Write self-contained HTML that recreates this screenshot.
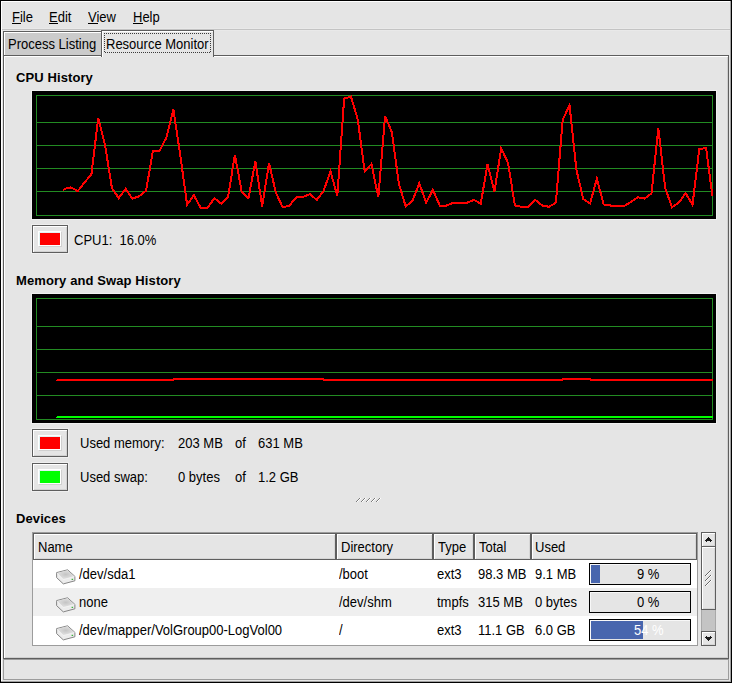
<!DOCTYPE html>
<html><head><meta charset="utf-8"><style>
html,body{margin:0;padding:0;}
body{width:732px;height:683px;overflow:hidden;position:relative;background:#e5e5e5;font-family:"Liberation Sans",sans-serif;}
.t{position:absolute;font-size:14px;line-height:15px;white-space:nowrap;color:#000;transform:scaleX(0.9286);transform-origin:0 0;}
.b{font-size:13px;font-weight:bold;transform:none;letter-spacing:0.1px;}
</style></head><body>
<div style="position:absolute;left:0px;top:0px;width:732px;height:683px;background:#000"></div>
<div style="position:absolute;left:1px;top:1px;width:730px;height:681px;background:#a0a0a0"></div>
<div style="position:absolute;left:1px;top:1px;width:729px;height:680px;background:#ffffff"></div>
<div style="position:absolute;left:2px;top:2px;width:728px;height:679px;background:#e5e5e5"></div>
<div style="position:absolute;left:2px;top:28px;width:728px;height:1px;background:#e9e9e9"></div>
<div style="position:absolute;left:2px;top:29px;width:728px;height:1px;background:#c3c3c3"></div>
<div style="position:absolute;left:2px;top:30px;width:728px;height:1px;background:#e9e9e9"></div>
<div class="t" style="left:12px;top:10px;">File</div>
<div style="position:absolute;left:12px;top:23px;width:9px;height:1px;background:#000"></div>
<div class="t" style="left:49px;top:10px;">Edit</div>
<div style="position:absolute;left:49px;top:23px;width:9px;height:1px;background:#000"></div>
<div class="t" style="left:88px;top:10px;">View</div>
<div style="position:absolute;left:88px;top:23px;width:10px;height:1px;background:#000"></div>
<div class="t" style="left:133px;top:10px;">Help</div>
<div style="position:absolute;left:133px;top:23px;width:10px;height:1px;background:#000"></div>
<div style="position:absolute;left:3px;top:55px;width:726px;height:604px;background:#5e5e5e"></div>
<div style="position:absolute;left:4px;top:56px;width:724px;height:602px;background:#fff"></div>
<div style="position:absolute;left:5px;top:57px;width:723px;height:601px;background:#cfcfcf"></div>
<div style="position:absolute;left:5px;top:57px;width:722px;height:600px;background:#e5e5e5"></div>
<div style="position:absolute;left:3px;top:31px;width:99px;height:25px;background:#5e5e5e"></div>
<div style="position:absolute;left:4px;top:32px;width:97px;height:23px;background:#fff"></div>
<div style="position:absolute;left:5px;top:33px;width:96px;height:22px;background:#cbcbcb"></div>
<div class="t" style="left:8px;top:37px;">Process Listing</div>
<div style="position:absolute;left:101px;top:30px;width:113px;height:27px;background:#5e5e5e"></div>
<div style="position:absolute;left:102px;top:31px;width:111px;height:26px;background:#fff"></div>
<div style="position:absolute;left:103px;top:32px;width:110px;height:26px;background:#e5e5e5"></div>
<svg style="position:absolute;left:0;top:0" width="732" height="683"><path d="M104 33h1v1h-1zM105 52h1v1h-1zM106 33h1v1h-1zM107 52h1v1h-1zM108 33h1v1h-1zM109 52h1v1h-1zM110 33h1v1h-1zM111 52h1v1h-1zM112 33h1v1h-1zM113 52h1v1h-1zM114 33h1v1h-1zM115 52h1v1h-1zM116 33h1v1h-1zM117 52h1v1h-1zM118 33h1v1h-1zM119 52h1v1h-1zM120 33h1v1h-1zM121 52h1v1h-1zM122 33h1v1h-1zM123 52h1v1h-1zM124 33h1v1h-1zM125 52h1v1h-1zM126 33h1v1h-1zM127 52h1v1h-1zM128 33h1v1h-1zM129 52h1v1h-1zM130 33h1v1h-1zM131 52h1v1h-1zM132 33h1v1h-1zM133 52h1v1h-1zM134 33h1v1h-1zM135 52h1v1h-1zM136 33h1v1h-1zM137 52h1v1h-1zM138 33h1v1h-1zM139 52h1v1h-1zM140 33h1v1h-1zM141 52h1v1h-1zM142 33h1v1h-1zM143 52h1v1h-1zM144 33h1v1h-1zM145 52h1v1h-1zM146 33h1v1h-1zM147 52h1v1h-1zM148 33h1v1h-1zM149 52h1v1h-1zM150 33h1v1h-1zM151 52h1v1h-1zM152 33h1v1h-1zM153 52h1v1h-1zM154 33h1v1h-1zM155 52h1v1h-1zM156 33h1v1h-1zM157 52h1v1h-1zM158 33h1v1h-1zM159 52h1v1h-1zM160 33h1v1h-1zM161 52h1v1h-1zM162 33h1v1h-1zM163 52h1v1h-1zM164 33h1v1h-1zM165 52h1v1h-1zM166 33h1v1h-1zM167 52h1v1h-1zM168 33h1v1h-1zM169 52h1v1h-1zM170 33h1v1h-1zM171 52h1v1h-1zM172 33h1v1h-1zM173 52h1v1h-1zM174 33h1v1h-1zM175 52h1v1h-1zM176 33h1v1h-1zM177 52h1v1h-1zM178 33h1v1h-1zM179 52h1v1h-1zM180 33h1v1h-1zM181 52h1v1h-1zM182 33h1v1h-1zM183 52h1v1h-1zM184 33h1v1h-1zM185 52h1v1h-1zM186 33h1v1h-1zM187 52h1v1h-1zM188 33h1v1h-1zM189 52h1v1h-1zM190 33h1v1h-1zM191 52h1v1h-1zM192 33h1v1h-1zM193 52h1v1h-1zM194 33h1v1h-1zM195 52h1v1h-1zM196 33h1v1h-1zM197 52h1v1h-1zM198 33h1v1h-1zM199 52h1v1h-1zM200 33h1v1h-1zM201 52h1v1h-1zM202 33h1v1h-1zM203 52h1v1h-1zM204 33h1v1h-1zM205 52h1v1h-1zM206 33h1v1h-1zM207 52h1v1h-1zM208 33h1v1h-1zM209 52h1v1h-1zM210 33h1v1h-1zM104 35h1v1h-1zM210 35h1v1h-1zM104 37h1v1h-1zM210 37h1v1h-1zM104 39h1v1h-1zM210 39h1v1h-1zM104 41h1v1h-1zM210 41h1v1h-1zM104 43h1v1h-1zM210 43h1v1h-1zM104 45h1v1h-1zM210 45h1v1h-1zM104 47h1v1h-1zM210 47h1v1h-1zM104 49h1v1h-1zM210 49h1v1h-1zM104 51h1v1h-1zM210 51h1v1h-1z" fill="#3a3a3a" shape-rendering="crispEdges"/></svg>
<div class="t" style="left:106px;top:37px;">Resource Monitor</div>
<div class="t b" style="left:16px;top:70px;">CPU History</div>
<div class="t b" style="left:16px;top:273px;">Memory and Swap History</div>
<div class="t b" style="left:16px;top:511px;">Devices</div>
<div style="position:absolute;left:31px;top:90px;width:686px;height:130px;background:#f1f1f1"></div>
<div style="position:absolute;left:32px;top:91px;width:684px;height:128px;background:#000"></div>
<div style="position:absolute;left:36px;top:95px;width:677px;height:121px;border:1px solid #228b22;box-sizing:border-box"></div>
<div style="position:absolute;left:36px;top:122px;width:677px;height:1px;background:#228b22"></div>
<div style="position:absolute;left:36px;top:145px;width:677px;height:1px;background:#228b22"></div>
<div style="position:absolute;left:36px;top:168px;width:677px;height:1px;background:#228b22"></div>
<div style="position:absolute;left:36px;top:191px;width:677px;height:1px;background:#228b22"></div>
<svg style="position:absolute;left:0;top:0" width="732" height="683"><polyline points="64.12,188.9 70.95,187.4 77.78,191.1 84.61,182.4 91.44,174.1 98.27,117.8 105.10,145.5 111.93,188.0 118.76,198.1 125.59,188.9 132.42,198.6 139.25,196.2 146.08,190.7 152.91,151.0 159.74,150.7 166.57,137.2 173.40,109.5 180.23,155.0 187.06,204.5 193.89,195.3 200.72,207.9 207.55,207.9 214.38,198.1 221.21,203.6 228.04,197.2 234.87,154.7 241.70,191.6 248.53,198.1 255.36,161.2 262.19,206.4 269.02,163.0 275.85,192.6 282.68,207.3 289.51,205.5 296.34,197.2 303.17,196.8 310.00,194.0 316.83,200.0 323.66,190.7 330.49,171.3 337.32,196.2 344.15,98.5 350.98,96.6 357.81,119.7 364.64,171.3 371.47,164.0 378.30,197.2 385.13,116.0 391.96,132.6 398.79,183.3 405.62,206.4 412.45,200.9 419.28,183.3 426.11,202.7 432.94,189.8 439.77,205.5 446.60,205.5 453.43,202.7 460.26,202.7 467.09,202.7 473.92,200.0 480.75,203.6 487.58,164.0 494.41,191.6 501.24,148.3 508.07,163.0 514.90,205.5 521.73,206.8 528.56,206.8 535.39,200.0 542.22,205.5 549.05,206.8 555.88,202.7 562.71,119.7 569.54,105.3 576.37,169.5 583.20,199.0 590.03,203.6 596.86,178.7 603.69,204.5 610.52,205.5 617.35,205.5 624.18,206.0 631.01,201.8 637.84,197.2 644.67,198.6 651.50,193.5 658.33,128.0 665.16,188.0 671.99,207.3 678.82,202.7 685.65,193.1 692.48,204.9 699.31,148.8 706.14,148.3 712.40,196.2" fill="none" stroke="#ff0000" stroke-width="2" shape-rendering="crispEdges" stroke-linejoin="miter"/></svg>
<div style="position:absolute;left:63px;top:189px;width:1px;height:2px;background:#ff0000"></div>
<div style="position:absolute;left:31px;top:293px;width:686px;height:131px;background:#f1f1f1"></div>
<div style="position:absolute;left:32px;top:294px;width:684px;height:129px;background:#000"></div>
<div style="position:absolute;left:36px;top:298px;width:677px;height:122px;border:1px solid #228b22;box-sizing:border-box"></div>
<div style="position:absolute;left:36px;top:326px;width:677px;height:1px;background:#228b22"></div>
<div style="position:absolute;left:36px;top:349px;width:677px;height:1px;background:#228b22"></div>
<div style="position:absolute;left:36px;top:372px;width:677px;height:1px;background:#228b22"></div>
<div style="position:absolute;left:36px;top:395px;width:677px;height:1px;background:#228b22"></div>
<div style="position:absolute;left:57px;top:379px;width:117px;height:2px;background:#ff0000"></div>
<div style="position:absolute;left:173px;top:378px;width:151px;height:2px;background:#ff0000"></div>
<div style="position:absolute;left:323px;top:379px;width:240px;height:2px;background:#ff0000"></div>
<div style="position:absolute;left:562px;top:378px;width:29px;height:2px;background:#ff0000"></div>
<div style="position:absolute;left:590px;top:379px;width:123px;height:2px;background:#ff0000"></div>
<div style="position:absolute;left:56px;top:380px;width:1px;height:1px;background:#ff0000"></div>
<div style="position:absolute;left:57px;top:416px;width:656px;height:2px;background:#00ff00"></div>
<div style="position:absolute;left:56px;top:417px;width:1px;height:1px;background:#00ff00"></div>
<div style="position:absolute;left:31px;top:224px;width:38px;height:30px;background:#efefef"></div>
<div style="position:absolute;left:32px;top:225px;width:36px;height:28px;background:#5e5e5e"></div>
<div style="position:absolute;left:33px;top:226px;width:34px;height:26px;background:#fff"></div>
<div style="position:absolute;left:34px;top:227px;width:33px;height:25px;background:#d2d2d2"></div>
<div style="position:absolute;left:34px;top:227px;width:32px;height:24px;background:#e5e5e5"></div>
<div style="position:absolute;left:39px;top:232px;width:23px;height:15px;background:#d0d0d0"></div>
<div style="position:absolute;left:38px;top:231px;width:23px;height:15px;background:#fff"></div>
<div style="position:absolute;left:39px;top:232px;width:21px;height:13px;background:#e2f3f3"></div>
<div style="position:absolute;left:40px;top:233px;width:20px;height:12px;background:#ff0000"></div>
<div class="t" style="left:74px;top:233px;">CPU1:&nbsp; 16.0%</div>
<div style="position:absolute;left:31px;top:428px;width:38px;height:30px;background:#efefef"></div>
<div style="position:absolute;left:32px;top:429px;width:36px;height:28px;background:#5e5e5e"></div>
<div style="position:absolute;left:33px;top:430px;width:34px;height:26px;background:#fff"></div>
<div style="position:absolute;left:34px;top:431px;width:33px;height:25px;background:#d2d2d2"></div>
<div style="position:absolute;left:34px;top:431px;width:32px;height:24px;background:#e5e5e5"></div>
<div style="position:absolute;left:39px;top:436px;width:23px;height:15px;background:#d0d0d0"></div>
<div style="position:absolute;left:38px;top:435px;width:23px;height:15px;background:#fff"></div>
<div style="position:absolute;left:39px;top:436px;width:21px;height:13px;background:#e2f3f3"></div>
<div style="position:absolute;left:40px;top:437px;width:20px;height:12px;background:#ff0000"></div>
<div style="position:absolute;left:31px;top:462px;width:38px;height:30px;background:#efefef"></div>
<div style="position:absolute;left:32px;top:463px;width:36px;height:28px;background:#5e5e5e"></div>
<div style="position:absolute;left:33px;top:464px;width:34px;height:26px;background:#fff"></div>
<div style="position:absolute;left:34px;top:465px;width:33px;height:25px;background:#d2d2d2"></div>
<div style="position:absolute;left:34px;top:465px;width:32px;height:24px;background:#e5e5e5"></div>
<div style="position:absolute;left:39px;top:470px;width:23px;height:15px;background:#d0d0d0"></div>
<div style="position:absolute;left:38px;top:469px;width:23px;height:15px;background:#fff"></div>
<div style="position:absolute;left:39px;top:470px;width:21px;height:13px;background:#e2f3f3"></div>
<div style="position:absolute;left:40px;top:471px;width:20px;height:12px;background:#00ff00"></div>
<div class="t" style="left:80px;top:436px;">Used memory:</div>
<div class="t" style="left:178px;top:436px;">203 MB</div>
<div class="t" style="left:235px;top:436px;">of</div>
<div class="t" style="left:258px;top:436px;">631 MB</div>
<div class="t" style="left:80px;top:470px;">Used swap:</div>
<div class="t" style="left:178px;top:470px;">0 bytes</div>
<div class="t" style="left:235px;top:470px;">of</div>
<div class="t" style="left:258px;top:470px;">1.2 GB</div>
<div style="position:absolute;left:356px;top:501px;width:1px;height:1px;background:#7a7a7a"></div>
<div style="position:absolute;left:357px;top:501px;width:1px;height:1px;background:#ffffff"></div>
<div style="position:absolute;left:357px;top:500px;width:1px;height:1px;background:#7a7a7a"></div>
<div style="position:absolute;left:358px;top:500px;width:1px;height:1px;background:#ffffff"></div>
<div style="position:absolute;left:358px;top:499px;width:1px;height:1px;background:#7a7a7a"></div>
<div style="position:absolute;left:359px;top:499px;width:1px;height:1px;background:#ffffff"></div>
<div style="position:absolute;left:359px;top:498px;width:1px;height:1px;background:#7a7a7a"></div>
<div style="position:absolute;left:360px;top:498px;width:1px;height:1px;background:#ffffff"></div>
<div style="position:absolute;left:361px;top:501px;width:1px;height:1px;background:#7a7a7a"></div>
<div style="position:absolute;left:362px;top:501px;width:1px;height:1px;background:#ffffff"></div>
<div style="position:absolute;left:362px;top:500px;width:1px;height:1px;background:#7a7a7a"></div>
<div style="position:absolute;left:363px;top:500px;width:1px;height:1px;background:#ffffff"></div>
<div style="position:absolute;left:363px;top:499px;width:1px;height:1px;background:#7a7a7a"></div>
<div style="position:absolute;left:364px;top:499px;width:1px;height:1px;background:#ffffff"></div>
<div style="position:absolute;left:364px;top:498px;width:1px;height:1px;background:#7a7a7a"></div>
<div style="position:absolute;left:365px;top:498px;width:1px;height:1px;background:#ffffff"></div>
<div style="position:absolute;left:366px;top:501px;width:1px;height:1px;background:#7a7a7a"></div>
<div style="position:absolute;left:367px;top:501px;width:1px;height:1px;background:#ffffff"></div>
<div style="position:absolute;left:367px;top:500px;width:1px;height:1px;background:#7a7a7a"></div>
<div style="position:absolute;left:368px;top:500px;width:1px;height:1px;background:#ffffff"></div>
<div style="position:absolute;left:368px;top:499px;width:1px;height:1px;background:#7a7a7a"></div>
<div style="position:absolute;left:369px;top:499px;width:1px;height:1px;background:#ffffff"></div>
<div style="position:absolute;left:369px;top:498px;width:1px;height:1px;background:#7a7a7a"></div>
<div style="position:absolute;left:370px;top:498px;width:1px;height:1px;background:#ffffff"></div>
<div style="position:absolute;left:371px;top:501px;width:1px;height:1px;background:#7a7a7a"></div>
<div style="position:absolute;left:372px;top:501px;width:1px;height:1px;background:#ffffff"></div>
<div style="position:absolute;left:372px;top:500px;width:1px;height:1px;background:#7a7a7a"></div>
<div style="position:absolute;left:373px;top:500px;width:1px;height:1px;background:#ffffff"></div>
<div style="position:absolute;left:373px;top:499px;width:1px;height:1px;background:#7a7a7a"></div>
<div style="position:absolute;left:374px;top:499px;width:1px;height:1px;background:#ffffff"></div>
<div style="position:absolute;left:374px;top:498px;width:1px;height:1px;background:#7a7a7a"></div>
<div style="position:absolute;left:375px;top:498px;width:1px;height:1px;background:#ffffff"></div>
<div style="position:absolute;left:376px;top:501px;width:1px;height:1px;background:#7a7a7a"></div>
<div style="position:absolute;left:377px;top:501px;width:1px;height:1px;background:#ffffff"></div>
<div style="position:absolute;left:377px;top:500px;width:1px;height:1px;background:#7a7a7a"></div>
<div style="position:absolute;left:378px;top:500px;width:1px;height:1px;background:#ffffff"></div>
<div style="position:absolute;left:378px;top:499px;width:1px;height:1px;background:#7a7a7a"></div>
<div style="position:absolute;left:379px;top:499px;width:1px;height:1px;background:#ffffff"></div>
<div style="position:absolute;left:379px;top:498px;width:1px;height:1px;background:#7a7a7a"></div>
<div style="position:absolute;left:380px;top:498px;width:1px;height:1px;background:#ffffff"></div>
<div style="position:absolute;left:32px;top:532px;width:666px;height:114px;background:#9c9c9c"></div>
<div style="position:absolute;left:33px;top:533px;width:664px;height:112px;background:#fff"></div>
<div style="position:absolute;left:33px;top:588px;width:664px;height:28px;background:#efefef"></div>
<div style="position:absolute;left:33px;top:533px;width:303px;height:27px;background:#5e5e5e"></div>
<div style="position:absolute;left:34px;top:534px;width:301px;height:25px;background:#fff"></div>
<div style="position:absolute;left:35px;top:535px;width:300px;height:24px;#d6d6d6;background:#d6d6d6"></div>
<div style="position:absolute;left:35px;top:535px;width:299px;height:23px;background:#e5e5e5"></div>
<div class="t" style="left:38px;top:540px;">Name</div>
<div style="position:absolute;left:336px;top:533px;width:97px;height:27px;background:#5e5e5e"></div>
<div style="position:absolute;left:337px;top:534px;width:95px;height:25px;background:#fff"></div>
<div style="position:absolute;left:338px;top:535px;width:94px;height:24px;#d6d6d6;background:#d6d6d6"></div>
<div style="position:absolute;left:338px;top:535px;width:93px;height:23px;background:#e5e5e5"></div>
<div class="t" style="left:341px;top:540px;">Directory</div>
<div style="position:absolute;left:433px;top:533px;width:41px;height:27px;background:#5e5e5e"></div>
<div style="position:absolute;left:434px;top:534px;width:39px;height:25px;background:#fff"></div>
<div style="position:absolute;left:435px;top:535px;width:38px;height:24px;#d6d6d6;background:#d6d6d6"></div>
<div style="position:absolute;left:435px;top:535px;width:37px;height:23px;background:#e5e5e5"></div>
<div class="t" style="left:438px;top:540px;">Type</div>
<div style="position:absolute;left:474px;top:533px;width:57px;height:27px;background:#5e5e5e"></div>
<div style="position:absolute;left:475px;top:534px;width:55px;height:25px;background:#fff"></div>
<div style="position:absolute;left:476px;top:535px;width:54px;height:24px;#d6d6d6;background:#d6d6d6"></div>
<div style="position:absolute;left:476px;top:535px;width:53px;height:23px;background:#e5e5e5"></div>
<div class="t" style="left:479px;top:540px;">Total</div>
<div style="position:absolute;left:531px;top:533px;width:166px;height:27px;background:#5e5e5e"></div>
<div style="position:absolute;left:532px;top:534px;width:164px;height:25px;background:#fff"></div>
<div style="position:absolute;left:533px;top:535px;width:163px;height:24px;#d6d6d6;background:#d6d6d6"></div>
<div style="position:absolute;left:533px;top:535px;width:162px;height:23px;background:#e5e5e5"></div>
<div class="t" style="left:535px;top:540px;">Used</div>
<div style="position:absolute;left:52px;top:564px;width:28px;height:24px"><svg width="28" height="24" viewBox="0 0 28 24"><defs><radialGradient id="tg" cx="0.5" cy="0.45" r="0.55"><stop offset="0" stop-color="#c4c4c4"/><stop offset="1" stop-color="#e4e4e4"/></radialGradient></defs><path d="M4.6 8.6 L15.6 5.8 L22.9 12.4 L22.9 16.8 L11.3 19.9 L4.6 13.6 Z" fill="#ececec" stroke="#808080" stroke-width="0.95" stroke-linejoin="round"/><path d="M5.1 8.9 L15.5 6.3 L22.4 12.5 L11.3 15.5 Z" fill="url(#tg)"/><path d="M5 9.2 L11.3 15.6 L22.4 12.6" fill="none" stroke="#f6f6f6" stroke-width="0.7"/><rect x="19.6" y="14.8" width="1.5" height="1.2" fill="#3cb43c"/></svg></div>
<div class="t" style="left:79px;top:567px;">/dev/sda1</div>
<div class="t" style="left:339px;top:567px;">/boot</div>
<div class="t" style="left:437px;top:567px;">ext3</div>
<div class="t" style="left:478px;top:567px;">98.3 MB</div>
<div class="t" style="left:535px;top:567px;">9.1 MB</div>
<div style="position:absolute;left:589px;top:563px;width:102px;height:22px;background:#000"></div>
<div style="position:absolute;left:590px;top:564px;width:100px;height:20px;background:#f8f8f8"></div>
<div style="position:absolute;left:591px;top:565px;width:99px;height:19px;background:#e5e5e5"></div>
<div style="position:absolute;left:591px;top:565px;width:9px;height:18px;background:#4866ae"></div>
<div class="t" style="left:637px;top:567px;color:#000;">9 %</div>
<div style="position:absolute;left:52px;top:592px;width:28px;height:24px"><svg width="28" height="24" viewBox="0 0 28 24"><defs><radialGradient id="tg" cx="0.5" cy="0.45" r="0.55"><stop offset="0" stop-color="#c4c4c4"/><stop offset="1" stop-color="#e4e4e4"/></radialGradient></defs><path d="M4.6 8.6 L15.6 5.8 L22.9 12.4 L22.9 16.8 L11.3 19.9 L4.6 13.6 Z" fill="#ececec" stroke="#808080" stroke-width="0.95" stroke-linejoin="round"/><path d="M5.1 8.9 L15.5 6.3 L22.4 12.5 L11.3 15.5 Z" fill="url(#tg)"/><path d="M5 9.2 L11.3 15.6 L22.4 12.6" fill="none" stroke="#f6f6f6" stroke-width="0.7"/><rect x="19.6" y="14.8" width="1.5" height="1.2" fill="#3cb43c"/></svg></div>
<div class="t" style="left:79px;top:595px;">none</div>
<div class="t" style="left:339px;top:595px;">/dev/shm</div>
<div class="t" style="left:437px;top:595px;">tmpfs</div>
<div class="t" style="left:478px;top:595px;">315 MB</div>
<div class="t" style="left:535px;top:595px;">0 bytes</div>
<div style="position:absolute;left:589px;top:591px;width:102px;height:22px;background:#000"></div>
<div style="position:absolute;left:590px;top:592px;width:100px;height:20px;background:#f8f8f8"></div>
<div style="position:absolute;left:591px;top:593px;width:99px;height:19px;background:#e5e5e5"></div>
<div class="t" style="left:637px;top:595px;color:#000;">0 %</div>
<div style="position:absolute;left:52px;top:620px;width:28px;height:24px"><svg width="28" height="24" viewBox="0 0 28 24"><defs><radialGradient id="tg" cx="0.5" cy="0.45" r="0.55"><stop offset="0" stop-color="#c4c4c4"/><stop offset="1" stop-color="#e4e4e4"/></radialGradient></defs><path d="M4.6 8.6 L15.6 5.8 L22.9 12.4 L22.9 16.8 L11.3 19.9 L4.6 13.6 Z" fill="#ececec" stroke="#808080" stroke-width="0.95" stroke-linejoin="round"/><path d="M5.1 8.9 L15.5 6.3 L22.4 12.5 L11.3 15.5 Z" fill="url(#tg)"/><path d="M5 9.2 L11.3 15.6 L22.4 12.6" fill="none" stroke="#f6f6f6" stroke-width="0.7"/><rect x="19.6" y="14.8" width="1.5" height="1.2" fill="#3cb43c"/></svg></div>
<div class="t" style="left:79px;top:623px;">/dev/mapper/VolGroup00-LogVol00</div>
<div class="t" style="left:339px;top:623px;">/</div>
<div class="t" style="left:437px;top:623px;">ext3</div>
<div class="t" style="left:478px;top:623px;">11.1 GB</div>
<div class="t" style="left:535px;top:623px;">6.0 GB</div>
<div style="position:absolute;left:589px;top:619px;width:102px;height:22px;background:#000"></div>
<div style="position:absolute;left:590px;top:620px;width:100px;height:20px;background:#f8f8f8"></div>
<div style="position:absolute;left:591px;top:621px;width:99px;height:19px;background:#e5e5e5"></div>
<div style="position:absolute;left:591px;top:621px;width:52px;height:18px;background:#4866ae"></div>
<div class="t" style="left:634px;top:623px;color:#fff;">54 %</div>
<div style="position:absolute;left:701px;top:532px;width:15px;height:114px;background:#a8a8a8"></div>
<div style="position:absolute;left:702px;top:532px;width:13px;height:114px;background:#c4c4c4"></div>
<div style="position:absolute;left:701px;top:532px;width:15px;height:15px;background:#5e5e5e"></div>
<div style="position:absolute;left:702px;top:533px;width:13px;height:13px;background:#fff"></div>
<div style="position:absolute;left:703px;top:534px;width:12px;height:12px;background:#d6d6d6"></div>
<div style="position:absolute;left:703px;top:534px;width:11px;height:11px;background:#e5e5e5"></div>
<div style="position:absolute;left:701px;top:546px;width:15px;height:64px;background:#5e5e5e"></div>
<div style="position:absolute;left:702px;top:547px;width:13px;height:62px;background:#fff"></div>
<div style="position:absolute;left:703px;top:548px;width:12px;height:61px;background:#d6d6d6"></div>
<div style="position:absolute;left:703px;top:548px;width:11px;height:60px;background:#e5e5e5"></div>
<div style="position:absolute;left:701px;top:631px;width:15px;height:15px;background:#5e5e5e"></div>
<div style="position:absolute;left:702px;top:632px;width:13px;height:13px;background:#fff"></div>
<div style="position:absolute;left:703px;top:633px;width:12px;height:12px;background:#d6d6d6"></div>
<div style="position:absolute;left:703px;top:633px;width:11px;height:11px;background:#e5e5e5"></div>
<svg style="position:absolute;left:0;top:0" width="732" height="683"><line x1="705" y1="576" x2="711" y2="570" stroke="#666" stroke-width="1"/><line x1="706" y1="576" x2="712" y2="570" stroke="#fff" stroke-width="1"/><line x1="705" y1="581" x2="711" y2="575" stroke="#666" stroke-width="1"/><line x1="706" y1="581" x2="712" y2="575" stroke="#fff" stroke-width="1"/><line x1="705" y1="586" x2="711" y2="580" stroke="#666" stroke-width="1"/><line x1="706" y1="586" x2="712" y2="580" stroke="#fff" stroke-width="1"/></svg>
<div style="position:absolute;left:708px;top:537px;width:1px;height:1px;background:#1a1a1a"></div>
<div style="position:absolute;left:707px;top:538px;width:3px;height:1px;background:#1a1a1a"></div>
<div style="position:absolute;left:706px;top:539px;width:5px;height:1px;background:#1a1a1a"></div>
<div style="position:absolute;left:705px;top:540px;width:7px;height:1px;background:#1a1a1a"></div>
<div style="position:absolute;left:706px;top:541px;width:1px;height:1px;background:#1a1a1a"></div>
<div style="position:absolute;left:710px;top:541px;width:1px;height:1px;background:#1a1a1a"></div>
<div style="position:absolute;left:706px;top:636px;width:1px;height:1px;background:#1a1a1a"></div>
<div style="position:absolute;left:710px;top:636px;width:1px;height:1px;background:#1a1a1a"></div>
<div style="position:absolute;left:705px;top:637px;width:7px;height:1px;background:#1a1a1a"></div>
<div style="position:absolute;left:706px;top:638px;width:5px;height:1px;background:#1a1a1a"></div>
<div style="position:absolute;left:707px;top:639px;width:3px;height:1px;background:#1a1a1a"></div>
<div style="position:absolute;left:708px;top:640px;width:1px;height:1px;background:#1a1a1a"></div>
<div style="position:absolute;left:3px;top:659px;width:726px;height:21px;background:#9c9c9c"></div>
<div style="position:absolute;left:4px;top:660px;width:724px;height:19px;background:#e5e5e5"></div>
</body></html>
